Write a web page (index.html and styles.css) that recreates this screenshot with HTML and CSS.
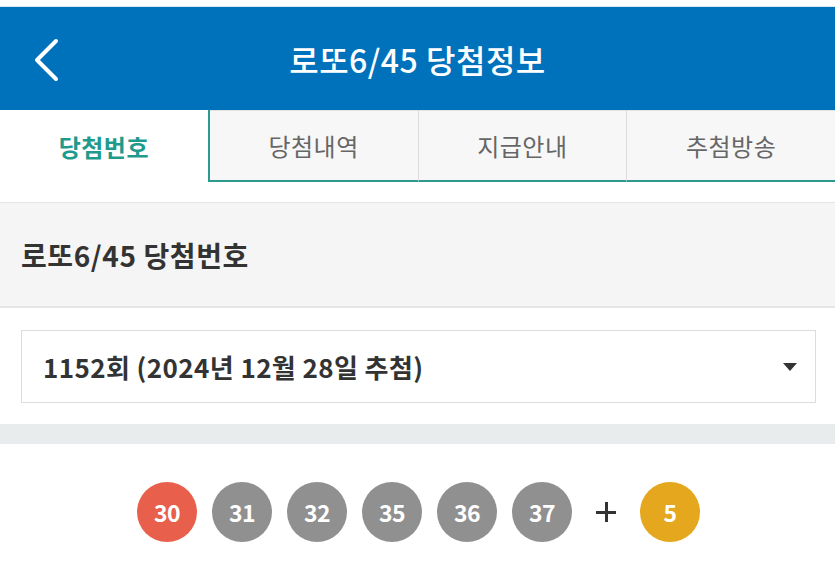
FILE: index.html
```html
<!DOCTYPE html>
<html>
<head>
    <title>로또6/45 당첨정보</title>
    <meta charset="utf-8">
    <link rel="stylesheet" href="styles.css">
</head>
<body>
    <div class="status"></div>
    <div class="header">
        <a class="back" href="#">
            <svg width="30" height="46" viewBox="0 0 30 46">
                <polyline points="24,4 5,23 24,42" fill="none" stroke="#fff" stroke-width="4" stroke-linecap="round" stroke-linejoin="round"/>
            </svg>
        </a>
        <h1>로또6/45 당첨정보</h1>
        <span></span>
    </div>

    <div class="tabs">
        <a class="tab active" href="#">당첨번호</a>
        <a class="tab" href="#">당첨내역</a>
        <a class="tab" href="#">지급안내</a>
        <a class="tab" href="#">추첨방송</a>
    </div>

    <div class="section-title">
        <h2>로또6/45 당첨번호</h2>
    </div>

    <div class="select-wrap">
        <div class="select">
            <span>1152회 (2024년 12월 28일 추첨)</span>
            <span class="caret"></span>
        </div>
    </div>

    <div class="band"></div>

    <!-- 당첨번호 -->
    <div class="balls">
        <span class="ball red">30</span>
        <span class="ball gray">31</span>
        <span class="ball gray">32</span>
        <span class="ball gray">35</span>
        <span class="ball gray">36</span>
        <span class="ball gray">37</span>
        <span class="plus"></span>
        <span class="ball yellow">5</span>
    </div>
</body>
</html>
```

FILE: styles.css
```css
body {
    margin: 0;
    font-family: "Noto Sans CJK KR", "Noto Sans", sans-serif;
    background: #fff;
    color: #333;
}
.status {
    height: 7px;
    background: #fff;
    border-bottom: 1px solid #d6e8f2;
    box-sizing: border-box;
}
.header {
    height: 103px;
    background: #0072bc;
    display: grid;
    grid-template-columns: 90px 1fr 90px;
    align-items: center;
}
.back {
    display: flex;
    padding-left: 32px;
    padding-top: 2px;
}
.header h1 {
    margin: 0;
    text-align: center;
    color: #fff;
    font-size: 32px;
    font-weight: 500;
    letter-spacing: 0.5px;
}
.tabs {
    display: flex;
    height: 72px;
}
.tab {
    flex: 1;
    display: flex;
    align-items: center;
    justify-content: center;
    text-decoration: none;
    font-size: 24px;
    letter-spacing: 0.5px;
    color: #666;
    background: #f7f7f7;
    border-top: 1px solid #e2e2e2;
    border-right: 1px solid #dcdcdc;
    border-bottom: 2px solid #2d9a90;
}
.tab:last-child {
    border-right: none;
}
.tab.active {
    background: #fff;
    color: #1f9a8c;
    font-weight: 700;
    border-top: none;
    border-bottom: none;
    border-right: 2px solid #2d9a90;
}
.section-title {
    margin-top: 20px;
    height: 106px;
    box-sizing: border-box;
    background: #f5f5f5;
    border-top: 1px solid #e4e4e4;
    border-bottom: 2px solid #e6e6e6;
    display: flex;
    align-items: center;
    padding-left: 21px;
}
.section-title h2 {
    margin: 0;
    font-size: 28px;
    font-weight: 700;
    letter-spacing: 0.6px;
    color: #333;
}
.select-wrap {
    padding: 22px 19px 21px 21px;
}
.select {
    height: 73px;
    box-sizing: border-box;
    border: 1px solid #dcdcdc;
    display: flex;
    align-items: center;
    justify-content: space-between;
    padding: 0 18px 0 21px;
    font-size: 26px;
    font-weight: 700;
    letter-spacing: 0.4px;
    color: #333;
}
.caret {
    width: 0;
    height: 0;
    border-left: 7px solid transparent;
    border-right: 7px solid transparent;
    border-top: 8px solid #333;
}
.band {
    height: 20px;
    background: #e9eced;
}
.balls {
    display: flex;
    justify-content: center;
    align-items: center;
    gap: 15px;
    padding: 38px 0 33px;
    padding-left: 2px;
}
.ball {
    width: 60px;
    height: 60px;
    border-radius: 50%;
    display: flex;
    align-items: center;
    justify-content: center;
    color: #fff;
    font-size: 23px;
    font-weight: 700;
    letter-spacing: -0.5px;
}
.red {
    background: #e8604c;
}
.gray {
    background: #909090;
}
.yellow {
    background: #e4a71d;
}
.plus {
    position: relative;
    width: 20px;
    height: 20px;
    margin: 0 9px;
}
.plus::before,
.plus::after {
    content: "";
    position: absolute;
    background: #333;
}
.plus::before {
    left: 0;
    top: 9px;
    width: 20px;
    height: 3px;
}
.plus::after {
    left: 9px;
    top: 0;
    width: 3px;
    height: 20px;
}
```
